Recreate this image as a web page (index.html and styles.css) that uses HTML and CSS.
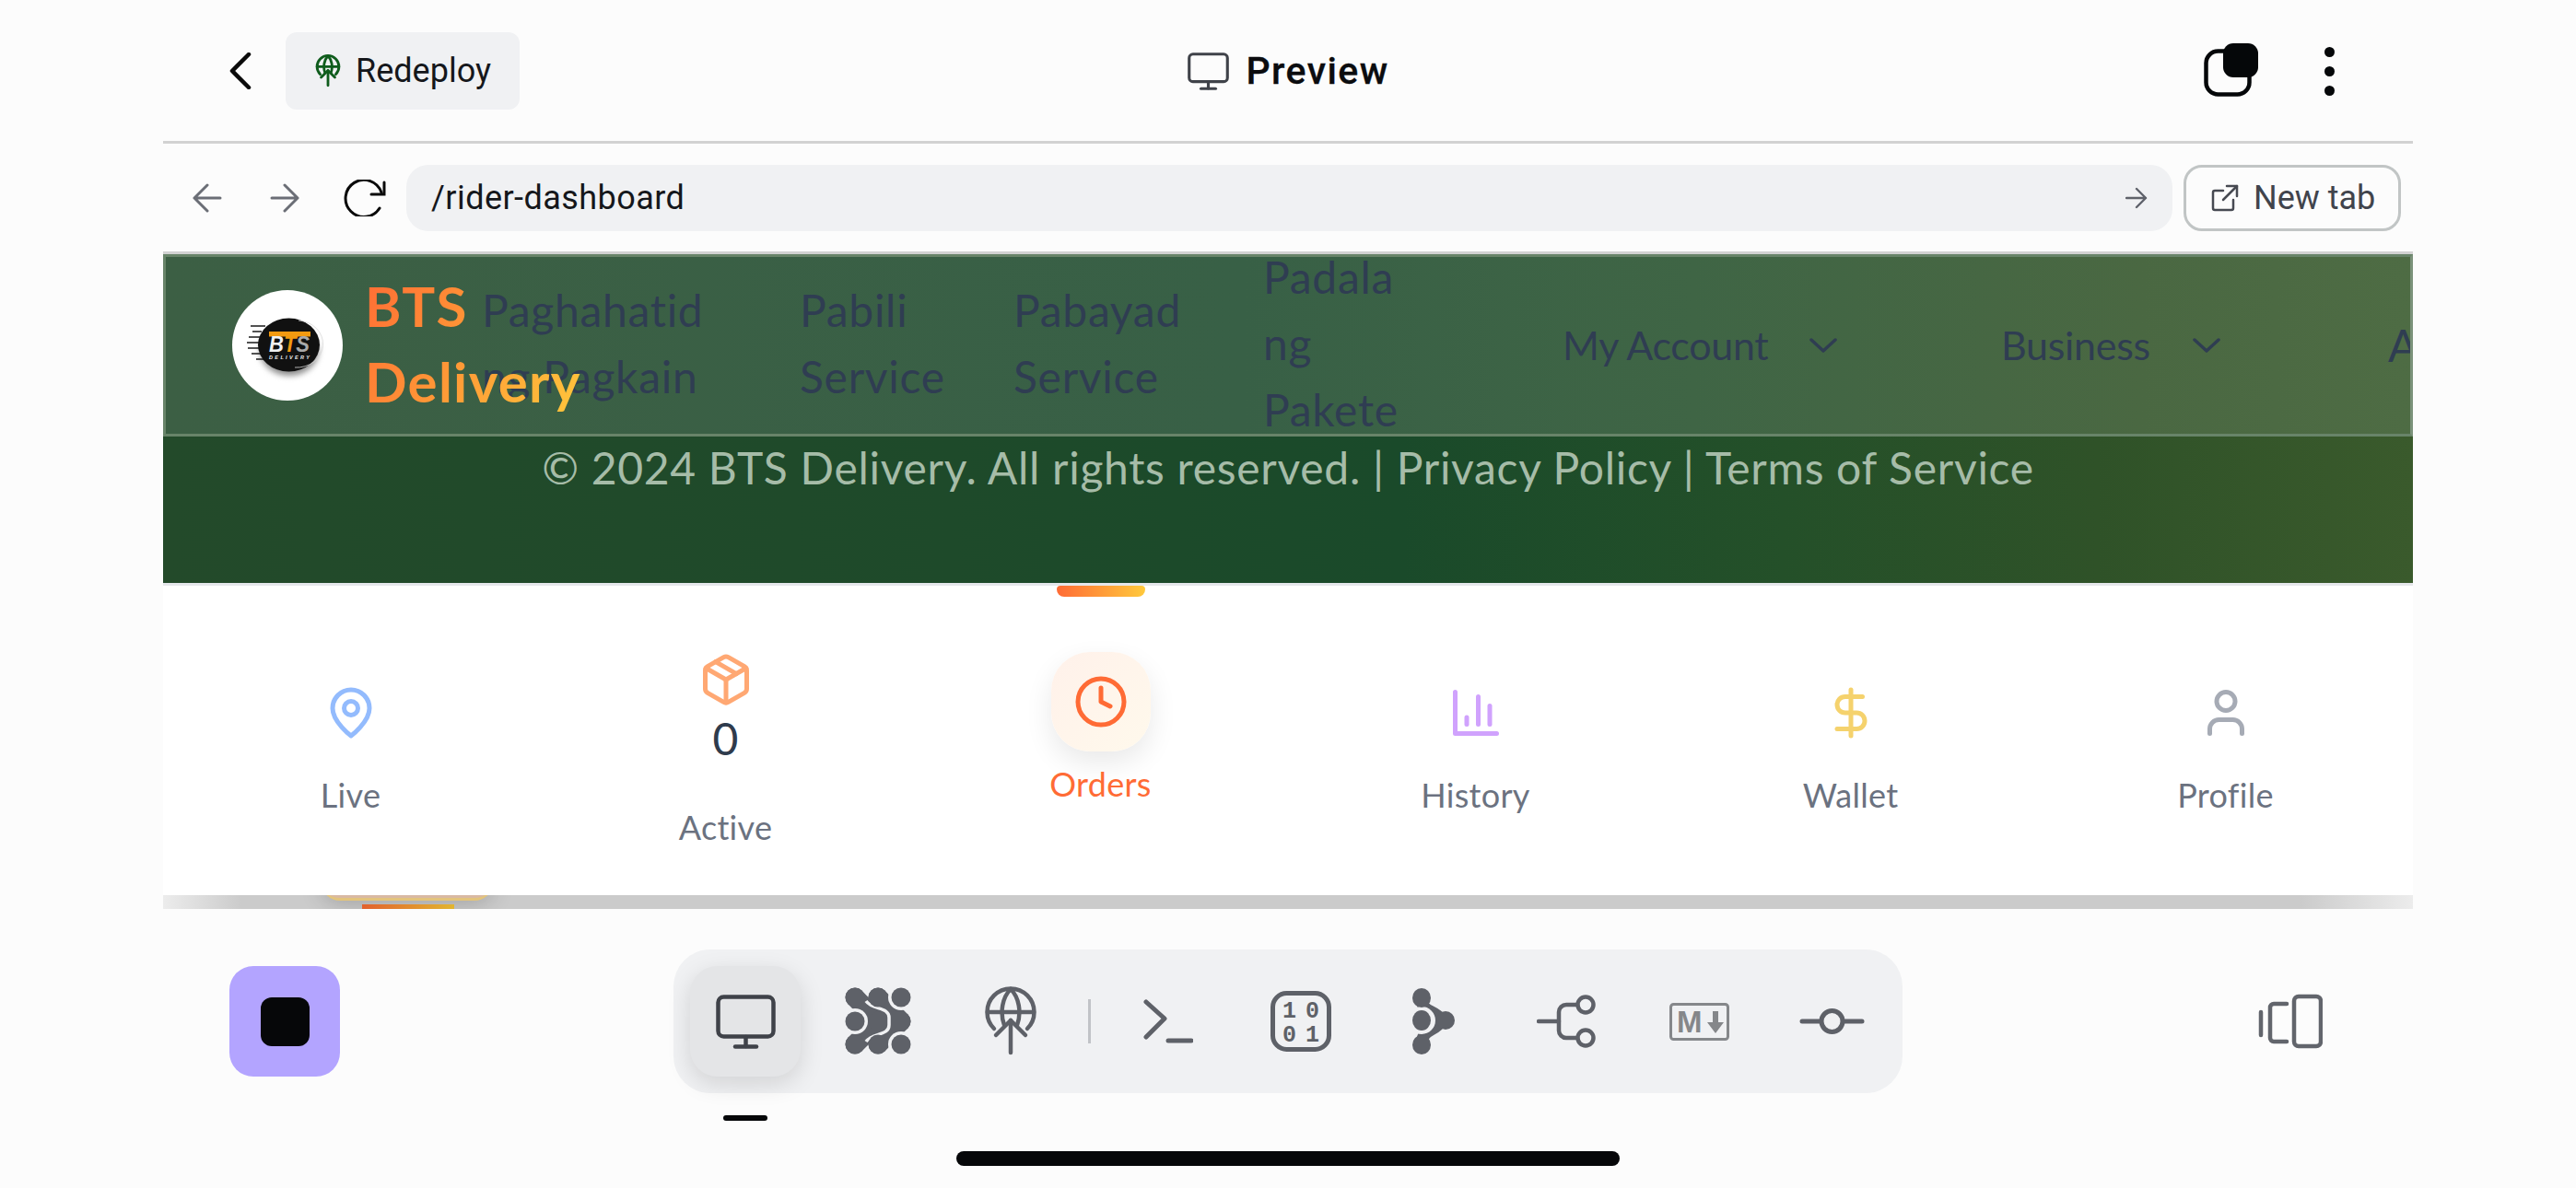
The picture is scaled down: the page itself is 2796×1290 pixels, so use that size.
FILE: index.html
```html
<!DOCTYPE html>
<html lang="en">
<head>
<meta charset="utf-8">
<title>Preview</title>
<link rel="stylesheet" href="styles.css">
</head>
<body>
<svg class="defs" width="0" height="0" aria-hidden="true">
  <symbol id="globe-up" viewBox="0 0 60 76">
    <g class="globe-lines">
      <path d="M12 46A25.500 25.500 0 1 1 48 46"/>
      <path d="M5 28H55"/>
      <path d="M23 42C18 28 21 12 30 3C39 12 42 28 37 42"/>
      <path d="M30 37V72"/>
      <path d="M14 53L30 37L46 53"/>
    </g>
  </symbol>
  <symbol id="monitor" viewBox="0 0 65 59">
    <g fill="none" stroke="currentColor" stroke-width="4.500" stroke-linecap="round" stroke-linejoin="round">
      <rect x="2.500" y="2.500" width="60" height="43" rx="6"/>
      <path d="M32.500 46V56"/>
      <path d="M21 56.500H44"/>
    </g>
  </symbol>
</svg>

<div class="frame">
  <header class="topbar">
    <div class="top-left">
      <svg class="ic-back" viewBox="0 0 24 40"><path d="M21 2L3 20L21 38"/></svg>
      <button class="redeploy">
        <svg class="ic-redeploy"><use href="#globe-up"/></svg>
        <span>Redeploy</span>
      </button>
    </div>
    <div class="top-title">
      <svg class="ic-title"><use href="#monitor"/></svg>
      <span>Preview</span>
    </div>
    <div class="top-right">
      <svg class="ic-copy" viewBox="0 0 60 60">
        <rect class="copy-back" x="2.500" y="8.500" width="47" height="47" rx="13"/>
        <rect class="copy-front" x="21" y="0" width="38" height="37" rx="11"/>
      </svg>
      <div class="kebab"><i></i><i></i><i></i></div>
    </div>
  </header>

  <div class="urlrow">
    <svg class="ic-arrow" viewBox="0 0 32 32"><path d="M30 16H2M16 2L2 16L16 30"/></svg>
    <svg class="ic-arrow" viewBox="0 0 32 32"><path d="M2 16H30M16 2L30 16L16 30"/></svg>
    <svg class="ic-reload" viewBox="0 0 46 40"><path d="M39 31A20 20 0 1 1 41 14"/><path d="M44 3V16H30"/></svg>
    <div class="urlbar">
      <span>/rider-dashboard</span>
      <svg class="ic-go" viewBox="0 0 24 24"><path d="M1 12H22M12 2L22 12L12 22"/></svg>
    </div>
    <button class="newtab">
      <svg class="ic-ext" viewBox="0 0 30 30"><path d="M24 17V26a2 2 0 0 1-2 2H4a2 2 0 0 1-2-2V9a2 2 0 0 1 2-2H13"/><path d="M17 2H28V13"/><path d="M28 2L13 17"/></svg>
      <span>New tab</span>
    </button>
  </div>

  <main class="preview">
    <nav class="sitenav">
      <div class="brand">
        <div class="logo">
          <svg viewBox="0 0 120 120" class="logo-art">
            <ellipse class="logo-shadow" cx="62" cy="66" rx="32" ry="27"/>
            <g class="logo-speed">
              <path d="M20 39H36M22 45H32M18 51H32M16 57H30M17 63H32M21 69H34M26 75H38"/>
            </g>
            <ellipse class="logo-disc" cx="61.500" cy="59.500" rx="33.500" ry="29"/>
            <path class="logo-ring" d="M72 33A28 25 0 0 1 68 84"/>
            <rect class="logo-bar" x="40" y="45" width="45" height="5.500"/>
            <text class="logo-bts" x="40" y="67" textLength="44" lengthAdjust="spacingAndGlyphs">B<tspan class="logo-t">T</tspan><tspan class="logo-s">S</tspan></text>
            <text class="logo-del" x="40" y="75" textLength="44">DELIVERY</text>
          </svg>
        </div>
        <div class="brand-name">BTS Delivery</div>
      </div>
      <a class="link l-food">Paghahatid ng Pagkain</a>
      <a class="link l-pabili">Pabili Service</a>
      <a class="link l-pabayad">Pabayad Service</a>
      <a class="link l-padala">Padala<br>ng<br>Pakete</a>
      <a class="link drop l-account">My Account<svg class="chev" viewBox="0 0 30 16"><path d="M2 2L15 14L28 2"/></svg></a>
      <a class="link drop l-business">Business<svg class="chev" viewBox="0 0 30 16"><path d="M2 2L15 14L28 2"/></svg></a>
      <a class="link l-about">About</a>
    </nav>

    <footer class="sitefoot">© 2024 BTS Delivery. All rights reserved. | Privacy Policy | Terms of Service</footer>

    <div class="tabs">
      <div class="tab t-low">
        <svg class="tabicon c-blue" viewBox="0 0 24 24"><path d="M20 10c0 6-8 12-8 12s-8-6-8-12a8 8 0 0 1 16 0Z"/><circle cx="12" cy="10" r="3"/></svg>
        <span class="tablabel">Live</span>
      </div>
      <div class="tab t-high">
        <svg class="tabicon c-orange" viewBox="0 0 24 24"><path d="m7.500 4.270 9 5.150"/><path d="M21 8a2 2 0 0 0-1-1.730l-7-4a2 2 0 0 0-2 0l-7 4A2 2 0 0 0 3 8v8a2 2 0 0 0 1 1.730l7 4a2 2 0 0 0 2 0l7-4A2 2 0 0 0 21 16Z"/><path d="m3.300 7 8.700 5 8.700-5"/><path d="M12 22V12"/></svg>
        <span class="tabvalue">0</span>
        <span class="tablabel">Active</span>
      </div>
      <div class="tab t-high is-current">
        <span class="current-bar"></span>
        <span class="bubble">
          <svg class="tabicon c-hot" viewBox="0 0 24 24"><circle cx="12" cy="12" r="10"/><path d="M12 6V12L16 14"/></svg>
        </span>
        <span class="tablabel">Orders</span>
      </div>
      <div class="tab t-low">
        <svg class="tabicon c-purple" viewBox="0 0 24 24"><path d="M3 3v18h18"/><path d="M18 17V9"/><path d="M13 17V5"/><path d="M8 17v-3"/></svg>
        <span class="tablabel">History</span>
      </div>
      <div class="tab t-low">
        <svg class="tabicon c-gold" viewBox="0 0 24 24"><path d="M12 2V22"/><path d="M17 5H9.500a3.500 3.500 0 0 0 0 7h5a3.500 3.500 0 0 1 0 7H6"/></svg>
        <span class="tablabel">Wallet</span>
      </div>
      <div class="tab t-low">
        <svg class="tabicon c-gray" viewBox="0 0 24 24"><path d="M19 21v-2a4 4 0 0 0-4-4H9a4 4 0 0 0-4 4v2"/><circle cx="12" cy="7" r="4"/></svg>
        <span class="tablabel">Profile</span>
      </div>
    </div>

    <div class="peek">
      <span class="peek-card"></span>
      <span class="peek-bar"></span>
    </div>
  </main>

  <div class="toolrow">
    <div class="tool-left">
      <button class="stop"><i></i></button>
    </div>
    <div class="tray">
      <button class="tool active">
        <svg class="i-monitor"><use href="#monitor"/></svg>
        <span class="tool-mark"></span>
      </button>
      <button class="tool">
        <svg class="i-dots" viewBox="0 0 96 88">
          <g class="blob">
            <path d="M23 18L48 44L23 69"/>
            <path d="M48 18L73 44L48 69"/>
            <path d="M48 44H73"/>
          </g>
          <path class="cut" d="M35 22C42 32 60 28 60 40V48C60 60 42 56 35 66"/>
          <circle class="ring" cx="23" cy="44" r="14"/>
          <circle class="ring" cx="73" cy="18" r="14"/>
          <circle class="ring" cx="73" cy="69" r="14"/>
          <g class="solid">
            <circle cx="23" cy="18" r="10.500"/><circle cx="48" cy="18" r="10.500"/><circle cx="73" cy="18" r="10.500"/>
            <circle cx="23" cy="44" r="10.500"/>
            <circle cx="23" cy="69" r="10.500"/><circle cx="48" cy="69" r="10.500"/><circle cx="73" cy="69" r="10.500"/>
          </g>
        </svg>
      </button>
      <button class="tool">
        <svg class="i-globe"><use href="#globe-up"/></svg>
      </button>
      <span class="tray-sep"></span>
      <button class="tool">
        <svg class="i-term" viewBox="0 0 54 48"><path d="M3 3L23 21L3 41"/><path d="M27 45H52"/></svg>
      </button>
      <button class="tool">
        <svg class="i-bin" viewBox="0 0 66 66">
          <rect class="bin-box" x="2.500" y="2.500" width="61" height="61" rx="15"/>
          <text class="bin-text" x="33" y="29" textLength="40">10</text>
          <text class="bin-text" x="33" y="55" textLength="40">01</text>
        </svg>
      </button>
      <button class="tool">
        <svg class="i-fork" viewBox="0 0 46 72">
          <path class="fork-body" d="M10 10C10 28 24 22 32 35C24 48 10 44 10 62"/>
          <circle class="solid-c" cx="36" cy="35" r="10"/>
          <circle class="ring" cx="10" cy="35" r="15"/>
          <ellipse class="solid-c" cx="10" cy="10.500" rx="10" ry="10.500"/>
          <ellipse class="solid-c" cx="10" cy="35" rx="10" ry="11"/>
          <ellipse class="solid-c" cx="10" cy="61.500" rx="10" ry="10.500"/>
        </svg>
      </button>
      <button class="tool">
        <svg class="i-branch" viewBox="0 0 64 58"><circle cx="53" cy="11" r="8.500"/><circle cx="53" cy="47" r="8.500"/><path d="M2 29H24"/><path d="M44 11H32a8 8 0 0 0-8 8V39a8 8 0 0 0 8 8H44"/></svg>
      </button>
      <button class="tool">
        <svg class="i-md" viewBox="0 0 65 41">
          <rect class="md-box" x="1.500" y="1.500" width="62" height="38" rx="3"/>
          <text class="md-m" x="8" y="32">M</text>
          <path class="md-arrow" d="M47 9H53V21H59L50 33L41 21H47Z"/>
        </svg>
      </button>
      <button class="tool">
        <svg class="i-commit" viewBox="0 0 71 28"><circle cx="35.500" cy="14" r="11.500"/><path d="M3 14H23"/><path d="M48 14H68"/></svg>
      </button>
    </div>
    <div class="tool-right">
      <svg class="i-side" viewBox="0 0 70 60"><path d="M3 20V45"/><path d="M31 11H17a4 4 0 0 0-4 4V48a4 4 0 0 0 4 4H31"/><rect x="39" y="3" width="29" height="54" rx="5"/></svg>
    </div>
  </div>

  <div class="home-line"></div>
</div>
</body>
</html>
```

FILE: styles.css
```css
* { box-sizing: border-box; }

html, body {
  margin: 0;
  height: 1290px;
  overflow: hidden;
  background: #fcfcfc;
}

body {
  font-family: "Roboto", "Liberation Sans", sans-serif;
  color: #0b0c0f;
}

button {
  font: inherit;
  color: inherit;
  border: 0;
  background: none;
  padding: 0;
}

svg { display: block; }
.defs { position: absolute; }

.globe-lines {
  fill: none;
  stroke: currentColor;
  stroke-width: var(--globe-weight, 4.500px);
  stroke-linecap: round;
  stroke-linejoin: round;
}

.frame {
  margin: 0 177px;
  width: 2442px;
  height: 1290px;
  display: flex;
  flex-direction: column;
}

/* top bar */
.topbar {
  height: 156px;
  flex: none;
  border-bottom: 3px solid #d2d2d2;
  display: grid;
  grid-template-columns: 1fr auto 1fr;
  align-items: center;
  padding: 1px 72px 0;
}

.top-left { display: flex; align-items: center; gap: 37px; }

.ic-back { width: 24px; height: 40px; fill: none; stroke: #0a0a0a; stroke-width: 4.500; stroke-linecap: round; stroke-linejoin: round; }

.redeploy {
  width: 254px;
  height: 84px;
  border-radius: 12px;
  background: #f0f1f3;
  display: flex;
  align-items: center;
  gap: 16px;
  padding-left: 32px;
  font-size: 36px;
  color: #15171b;
}

.ic-redeploy { width: 28px; height: 36px; color: #0f5c1c; --globe-weight: 6px; }

.top-title {
  display: flex;
  align-items: center;
  gap: 19px;
  font-size: 41px;
  font-weight: 500;
  letter-spacing: 1.400px;
  -webkit-text-stroke: 0.3px #0b0c0f;
}

.ic-title { width: 45px; height: 41px; color: #3f4249; }

.top-right { display: flex; justify-content: flex-end; align-items: center; gap: 71px; margin-right: 13px; }

.ic-copy { width: 60px; height: 60px; }
.copy-back { fill: none; stroke: #050709; stroke-width: 4.500; }
.copy-front { fill: #050709; }

.kebab { display: flex; flex-direction: column; gap: 10px; }
.kebab i { width: 11px; height: 11px; border-radius: 50%; background: #050709; display: block; }

/* url row */
.urlrow {
  height: 120px;
  flex: none;
  border-bottom: 3px solid #d2d2d2;
  display: flex;
  align-items: center;
  padding-left: 32px;
}

.ic-arrow { width: 32px; height: 32px; margin-right: 52px; fill: none; stroke: #6b6e76; stroke-width: 3; stroke-linecap: round; stroke-linejoin: round; }
.ic-arrow + .ic-arrow { margin-right: 48px; }

.ic-reload { width: 46px; height: 40px; margin-right: 22px; fill: none; stroke: #0a0a0a; stroke-width: 3; stroke-linecap: round; }

.urlbar {
  width: 918px;
  flex: 1 1 auto;
  height: 72px;
  border-radius: 24px;
  background: #f0f1f3;
  display: flex;
  align-items: center;
  justify-content: space-between;
  padding: 0 27px;
  font-size: 36px;
  letter-spacing: 0.450px;
  color: #15171b;
}

.ic-go { width: 24px; height: 24px; fill: none; stroke: #5f626a; stroke-width: 2.400; stroke-linecap: round; stroke-linejoin: round; }

.newtab {
  flex: none;
  width: 236px;
  height: 72px;
  margin: 0 13px 0 12px;
  border: 3px solid #c1c5c5;
  border-radius: 20px;
  display: flex;
  align-items: center;
  gap: 16px;
  padding-left: 27px;
  font-size: 36px;
  color: #41444c;
}

.ic-ext { width: 30px; height: 30px; fill: none; stroke: #474a52; stroke-width: 2.500; stroke-linecap: round; stroke-linejoin: round; }

/* embedded page */
.preview {
  position: relative;
  height: 711px;
  flex: none;
  overflow: hidden;
  font-family: "Lato", "Open Sans", sans-serif;
}

.sitenav {
  height: 198px;
  background: linear-gradient(90deg, #3c5f44 0%, #386046 48%, #3f6545 68%, #4a6842 88%, #4e6c44 100%);
  border: 3px solid #688469;
  border-right-color: #7b927a;
  display: flex;
  align-items: center;
  padding: 0 0 4px 72px;
  overflow: hidden;
  white-space: nowrap;
}

.brand { flex: none; width: 271px; display: flex; align-items: center; gap: 28px; position: relative; z-index: 1; }

.logo { flex: none; width: 120px; height: 120px; border-radius: 50%; background: #fff; overflow: hidden; margin-top: 4px; }
.logo-art { width: 120px; height: 120px; }
.logo-shadow { fill: #8d8d8d; filter: blur(3px); }
.logo-speed path { fill: none; stroke: #1a1a1a; stroke-width: 1.600; }
.logo-disc { fill: #111; }
.logo-ring { fill: none; stroke: #d8d8d8; stroke-width: 0.800; }
.logo-bar { fill: #f39a10; }
.logo-bts { font-family: "Liberation Sans", sans-serif; font-weight: 700; font-style: italic; font-size: 23px; fill: #f1f1f1; }
.logo-t { fill: #f39a10; }
.logo-s { fill: #a9a9a9; }
.logo-del { font-family: "Liberation Sans", sans-serif; font-weight: 700; font-style: italic; font-size: 5.500px; fill: #eee; }

.brand-name {
  flex: none;
  width: 240px;
  margin-left: -4px;
  white-space: normal;
  font-size: 60px;
  font-weight: 700;
  line-height: 82px;
  letter-spacing: 1.300px;
  background: linear-gradient(120deg, #ff6b35 0%, #ff9636 45%, #ffc93c 100%);
  -webkit-background-clip: text;
  background-clip: text;
  color: transparent;
}

.link {
  flex: none;
  font-size: 48px;
  line-height: 72px;
  letter-spacing: 0.700px;
  color: #2f3d52;
  white-space: normal;
  display: block;
}

.l-food { width: 345px; padding-right: 100px; }
.l-pabili { width: 232px; padding-right: 60px; }
.l-pabayad { width: 271px; padding-right: 70px; }
.l-padala { width: 325px; }
.drop { display: flex; align-items: center; white-space: nowrap; font-size: 43px; letter-spacing: -0.3px; margin-top: 4px; }
.l-account { width: 476px; }
.l-business { width: 420px; }
.l-about { white-space: nowrap; margin-top: 4px; }
.l-account .chev { margin-left: 45px; }
.l-business .chev { margin-left: 46px; }

.chev { flex: none; width: 30px; height: 16px; fill: none; stroke: #2f3d52; stroke-width: 3.500; stroke-linecap: round; stroke-linejoin: round; }

.sitefoot {
  height: 159px;
  padding-bottom: 4px;
  background: linear-gradient(90deg, #234a2a 0%, #1e4a2a 35%, #1a4a2a 55%, #245029 72%, #2f5228 86%, #3a5a2c 100%);
  text-align: center;
  font-size: 48px;
  line-height: 68px;
  letter-spacing: 0.700px;
  color: #a6bca8;
}

.tabs {
  height: 339px;
  background: #fff;
  border-top: 3px solid #e5e7eb;
  display: grid;
  grid-template-columns: repeat(6, 1fr);
  position: relative;
  z-index: 1;
}

.tab {
  position: relative;
  display: flex;
  flex-direction: column;
  align-items: center;
}

.t-low { padding-top: 108px; }
.t-high { padding-top: 72px; }

.tabicon { flex: none; width: 60px; height: 60px; fill: none; stroke-width: 2; stroke-linecap: round; stroke-linejoin: round; }
.c-blue { stroke: #93bbfd; }
.c-orange { stroke: #ffa873; }
.c-hot { stroke: #ff6b35; }
.c-purple { stroke: #d0a2fd; }
.c-gold { stroke: #f5d26d; }
.c-gray { stroke: #a6abb5; }

.tablabel { font-size: 36px; line-height: 48px; margin-top: 35px; letter-spacing: 0.300px; color: #6b7280; }

.tabvalue { font-size: 48px; line-height: 68px; color: #2f3b4c; margin-bottom: 3px; }

.is-current .tablabel { margin-top: 11px; color: #ff6b35; }

.current-bar {
  position: absolute;
  top: 0;
  left: 50%;
  margin-left: -48px;
  width: 96px;
  height: 12px;
  border-radius: 4px 4px 8px 8px;
  background: linear-gradient(90deg, #ff6b35, #ffc93c);
}

.bubble {
  flex: none;
  width: 108px;
  height: 108px;
  border-radius: 42px;
  background: linear-gradient(135deg, #fff1ea, #fff9ec);
  display: flex;
  align-items: center;
  justify-content: center;
  box-shadow: 0 12px 30px rgba(0, 0, 0, 0.09);
}

.peek {
  position: relative;
  height: 15px;
  background: linear-gradient(90deg, #ececec 0%, #cbcbcb 3.500%, #cbcbcb 95%, #ececec 100%);
  overflow: hidden;
}

.peek-card {
  position: absolute;
  left: 172px;
  top: -24px;
  width: 186px;
  height: 30px;
  border-radius: 0 0 20px 20px;
  background: #d9b9a3;
  border-bottom: 3px solid #e3c47c;
  box-shadow: 0 3px 24px rgba(0, 0, 0, 0.2);
}

.peek-bar {
  position: absolute;
  left: 216px;
  top: 10px;
  width: 100px;
  height: 12px;
  background: linear-gradient(90deg, #e2612d, #e2b52f);
}

/* bottom toolbar */
.toolrow {
  flex: none;
  margin-top: 44px;
  height: 156px;
  display: grid;
  grid-template-columns: 1fr auto 1fr;
  align-items: center;
  padding: 0 72px;
}

.stop {
  width: 120px;
  height: 120px;
  border-radius: 26px;
  background: #b3a4ff;
  display: flex;
  align-items: center;
  justify-content: center;
}
.stop i { display: block; width: 53px; height: 53px; border-radius: 12px; background: #060709; }

.tray {
  height: 156px;
  border-radius: 40px;
  background: #f0f1f3;
  display: flex;
  align-items: center;
  gap: 24px;
  padding: 0 17px 0 18px;
}

.tool {
  position: relative;
  width: 120px;
  height: 120px;
  border-radius: 30px;
  display: flex;
  align-items: center;
  justify-content: center;
  color: #5e6168;
}

.tool.active {
  background: #e4e5e7;
  box-shadow: 0 8px 26px rgba(0, 0, 0, 0.13);
  color: #3f4249;
}

.tool-mark {
  position: absolute;
  left: 36px;
  top: 162px;
  width: 48px;
  height: 6px;
  border-radius: 3px;
  background: #060709;
}

.tray-sep { width: 3px; height: 48px; background: #c1c3c7; flex: none; }

.i-monitor { width: 65px; height: 59px; }
.i-dots { width: 96px; height: 88px; }
.blob path { fill: none; stroke: #5e6168; stroke-width: 21; stroke-linecap: round; stroke-linejoin: round; }
.cut { fill: none; stroke: #f0f1f3; stroke-width: 3.500; }
.ring { fill: #f0f1f3; }
.solid { fill: #5e6168; }
.solid-c { fill: #5e6168; }

.i-globe { width: 60px; height: 76px; }

.i-term { width: 54px; height: 48px; fill: none; stroke: #5e6168; stroke-width: 5; stroke-linecap: round; stroke-linejoin: round; }

.i-bin { width: 66px; height: 66px; }
.bin-box { fill: none; stroke: #5e6168; stroke-width: 5; }
.bin-text { font-family: "Liberation Mono", monospace; font-weight: 700; font-size: 25px; fill: #5e6168; text-anchor: middle; }

.i-fork { width: 46px; height: 72px; }
.fork-body { fill: none; stroke: #5e6168; stroke-width: 13; }

.i-branch { width: 64px; height: 58px; fill: none; stroke: #5e6168; stroke-width: 4.500; stroke-linecap: round; }

.i-md { width: 65px; height: 41px; }
.md-box { fill: none; stroke: #85878a; stroke-width: 3; }
.md-m { font-family: "Liberation Sans", sans-serif; font-weight: 700; font-size: 33px; fill: #85878a; }
.md-arrow { fill: #85878a; }

.i-commit { width: 71px; height: 28px; fill: none; stroke: #5e6168; stroke-width: 5; stroke-linecap: round; }

.tool-right { display: flex; justify-content: flex-end; margin-right: 26px; }
.i-side { width: 70px; height: 60px; fill: none; stroke: #62656c; stroke-width: 4.500; stroke-linecap: round; }

.home-line {
  flex: none;
  width: 720px;
  height: 16px;
  margin: 63px auto 0;
  border-radius: 8px;
  background: #060709;
}
```
